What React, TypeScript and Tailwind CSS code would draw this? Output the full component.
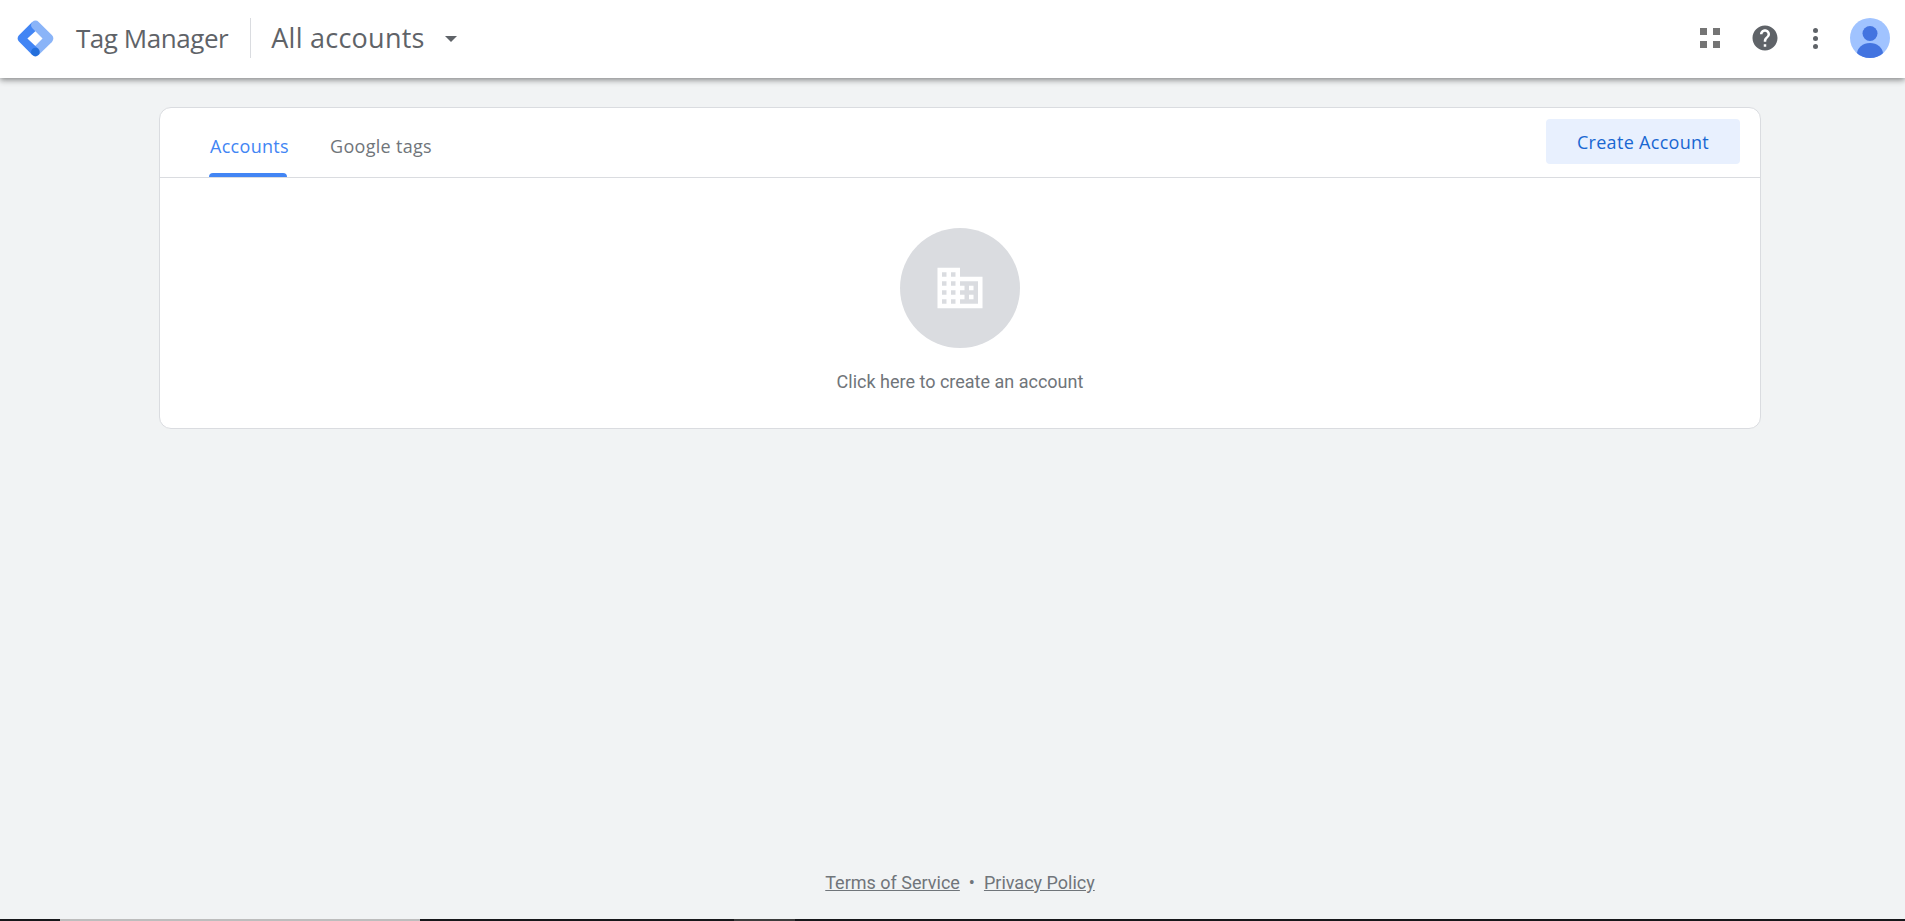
const googleFont = 'font-["Open_Sans","Liberation_Sans",sans-serif]'

function TagManagerLogo() {
  return (
    <svg viewBox="0 0 192 192" className="w-[39px] h-[39px]">
      <path fill="#8ab4f8" d="M111.3 176.8 80.8 147 146.4 80 178 112z" />
      <path
        fill="#4285f4"
        d="M111.4 45.1 81 14 14.4 80.1c-8.6 8.6-8.6 22.5 0 31.1L80 177l31-29-55-51.5z"
      />
      <path
        fill="#8ab4f8"
        d="M177.6 80.4l-66-66c-8.6-8.6-22.5-8.6-31.1 0-8.6 8.6-8.6 22.5 0 31.1l66 66c8.6 8.6 22.5 8.6 31.1 0 8.6-8.6 8.6-22.5 0-31.1z"
      />
      <circle fill="#246fdb" cx="95.5" cy="162.5" r="21.5" />
    </svg>
  )
}

function HeaderActions() {
  return (
    <div className="flex items-center">
      <div className="grid grid-cols-2 gap-[6px] w-[20px] h-[20px]">
        <span className="bg-[#757575]" />
        <span className="bg-[#757575]" />
        <span className="bg-[#757575]" />
        <span className="bg-[#757575]" />
      </div>
      <svg viewBox="0 0 24 24" className="w-[30px] h-[30px] ml-[30px] fill-[#5f6368]">
        <path d="M12 2C6.48 2 2 6.48 2 12s4.48 10 10 10 10-4.48 10-10S17.52 2 12 2zm1 17h-2v-2h2v2zm2.07-7.75l-.9.92C13.45 12.9 13 13.5 13 15h-2v-.5c0-1.1.45-2.1 1.17-2.83l1.24-1.26c.37-.36.59-.86.59-1.41 0-1.1-.9-2-2-2s-2 .9-2 2H8c0-2.21 1.79-4 4-4s4 1.79 4 4c0 .88-.36 1.68-.93 2.25z" />
      </svg>
      <div className="flex flex-col gap-[3px] ml-[33px]">
        <span className="w-[5px] h-[5px] rounded-full bg-[#5f6368]" />
        <span className="w-[5px] h-[5px] rounded-full bg-[#5f6368]" />
        <span className="w-[5px] h-[5px] rounded-full bg-[#5f6368]" />
      </div>
      <svg viewBox="0 0 40 40" className="w-[40px] h-[40px] ml-[32px]">
        <defs>
          <clipPath id="avatar">
            <circle cx="20" cy="20" r="20" />
          </clipPath>
        </defs>
        <g clipPath="url(#avatar)">
          <rect width="40" height="40" fill="#a0c3ff" />
          <circle cx="20" cy="15.5" r="7.5" fill="#4374e0" />
          <ellipse cx="20" cy="36" rx="13" ry="11" fill="#4374e0" />
        </g>
      </svg>
    </div>
  )
}

export default function App() {
  return (
    <div className="h-[921px] flex flex-col overflow-hidden bg-[#f1f3f4]">
      <header className="relative z-10 h-[78px] shrink-0 flex items-center justify-between bg-white pl-[16px] pr-[15px] pb-[2px] shadow-[0_2px_6px_rgba(0,0,0,0.45)]">
        <div className={`flex items-center ${googleFont} text-[#5f6368]`}>
          <TagManagerLogo />
          <span className="ml-[21px] text-[26px] tracking-[-0.45px]">Tag Manager</span>
          <span className="w-px h-[40px] bg-[#dadce0] ml-[22px]" />
          <span className="ml-[20px] text-[27px] tracking-[0.25px]">All accounts</span>
          <span className="ml-[20px] mt-[1px] border-x-[6px] border-t-[6px] border-x-transparent border-t-[#5f6368]" />
        </div>
        <HeaderActions />
      </header>

      <main className="flex-1 ml-[159px] w-[1602px] pt-[29px]">
        <section className="bg-white border border-[#dadce0] rounded-[12px]">
          <div className="h-[70px] flex justify-between border-b border-[#dadce0] pl-[49px] pr-[20px]">
            <nav className={`flex gap-[43px] ${googleFont} text-[18px] font-medium tracking-[0.3px]`}>
              <a className="relative w-[78px] pt-[25px] pl-[1px] text-[#4285f4] whitespace-nowrap">
                Accounts
                <span className="absolute left-0 right-0 bottom-0 h-[4px] rounded-t-[4px] bg-[#4285f4]" />
              </a>
              <a className="pt-[25px] text-[#70757a]">Google tags</a>
            </nav>
            <button className={`w-[194px] h-[45px] mt-[11px] pt-[1px] rounded-[4px] bg-[#e8f0fe] text-[#1967d2] text-[18px] font-medium tracking-[0.3px] ${googleFont}`}>
              Create Account
            </button>
          </div>
          <div className="h-[250px] flex flex-col items-center pt-[50px]">
            <div className="w-[120px] h-[120px] rounded-full bg-[#dadce0] flex items-center justify-center">
              <svg viewBox="0 0 24 24" className="w-[54px] h-[54px] fill-white">
                <path d="M12 7V3H2v18h20V7H12zM6 19H4v-2h2v2zm0-4H4v-2h2v2zm0-4H4V9h2v2zm0-4H4V5h2v2zm4 12H8v-2h2v2zm0-4H8v-2h2v2zm0-4H8V9h2v2zm0-4H8V5h2v2zm10 12h-8v-2h2v-2h-2v-2h2v-2h-2V9h8v10zm-2-8h-2v2h2v-2zm0 4h-2v2h2v-2z" />
              </svg>
            </div>
            <p className="mt-[20px] font-['Roboto',sans-serif] text-[18px] text-[#70757a]">
              Click here to create an account
            </p>
          </div>
        </section>
      </main>

      <footer className="h-[50px] ml-[159px] w-[1602px] flex justify-center gap-[9px] font-['Roboto',sans-serif] text-[18px] text-[#70757a]">
        <a className="underline">Terms of Service</a>
        <span>•</span>
        <a className="underline">Privacy Policy</a>
      </footer>

      <div className="h-[2px] shrink-0 flex bg-[#16171a]">
        <span className="w-[60px]" />
        <span className="w-[360px] bg-[#bdbdbd]" />
        <span className="w-[314px]" />
        <span className="w-[61px] bg-[#3c3c3c]" />
      </div>
    </div>
  )
}
